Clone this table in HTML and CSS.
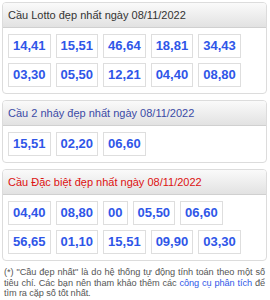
FILE: index.html
```html
<!DOCTYPE html>
<html lang="vi">
<head>
<meta charset="utf-8">
<link rel="stylesheet" href="styles.css">
</head>
<body>
<div class="page">
  <div class="panel">
    <div class="panel-head">Cầu Lotto đẹp nhất ngày 08/11/2022</div>
    <div class="panel-body">
      <span class="num">14,41</span><span class="num">15,51</span><span class="num">46,64</span><span class="num">18,81</span><span class="num">34,43</span>
      <span class="num">03,30</span><span class="num">05,50</span><span class="num">12,21</span><span class="num">04,40</span><span class="num">08,80</span>
    </div>
  </div>
  <div class="panel">
    <div class="panel-head blue">Cầu 2 nháy đẹp nhất ngày 08/11/2022</div>
    <div class="panel-body">
      <span class="num">15,51</span><span class="num">02,20</span><span class="num">06,60</span>
    </div>
  </div>
  <div class="panel">
    <div class="panel-head red">Cầu Đặc biệt đẹp nhất ngày 08/11/2022</div>
    <div class="panel-body">
      <span class="num">04,40</span><span class="num">08,80</span><span class="num">00</span><span class="num">05,50</span><span class="num">06,60</span>
      <span class="num">56,65</span><span class="num">01,10</span><span class="num">15,51</span><span class="num">09,90</span><span class="num">03,30</span>
    </div>
  </div>
  <p class="note"><span class="line full">(*) "Cầu đẹp nhất" là do hệ thống tự động tính toán theo một số</span><span class="line full">tiêu chí. Các bạn nên tham khảo thêm các <a class="link">công cụ phân tích</a> để</span><span class="line">tìm ra cặp số tốt nhất.</span></p>
</div>
</body>
</html>
```
FILE: styles.css
```css
html, body {
  margin: 0;
  padding: 0;
  background: #fff;
}
.page {
  padding: 2px 3px 0 2px;
  font-family: "Liberation Sans", Arial, sans-serif;
}
.panel {
  border: 1px solid #dcdcdc;
  border-radius: 4px;
  margin-bottom: 6px;
  overflow: hidden;
}
.panel-head {
  height: 24px;
  line-height: 24px;
  padding-left: 5px;
  font-size: 11px;
  color: #333;
  background: linear-gradient(#fafafa, #e2e2e2);
  border-bottom: 1px solid #d0d0d0;
}
.panel-head.blue { color: #3b4aa6; }
.panel-head.red { color: #dd1111; }
.panel-body {
  display: flex;
  flex-wrap: wrap;
  gap: 5px 5px;
  padding: 6px 5px 6px 5px;
}
.num {
  display: inline-block;
  border: 1px solid #dedede;
  background: #fff;
  padding: 4px 4px;
  font-size: 13px;
  line-height: 14px;
  font-weight: bold;
  color: #2f56e8;
}
.note {
  margin: 4px 2px 0 2px;
  font-size: 9.2px;
  letter-spacing: -0.1px;
  line-height: 10.5px;
  color: #555;
}
.line {
  display: block;
  white-space: nowrap;
}
.line.full {
  text-align: justify;
  text-align-last: justify;
  white-space: normal;
}
.link {
  color: #2f56e8;
}
```
